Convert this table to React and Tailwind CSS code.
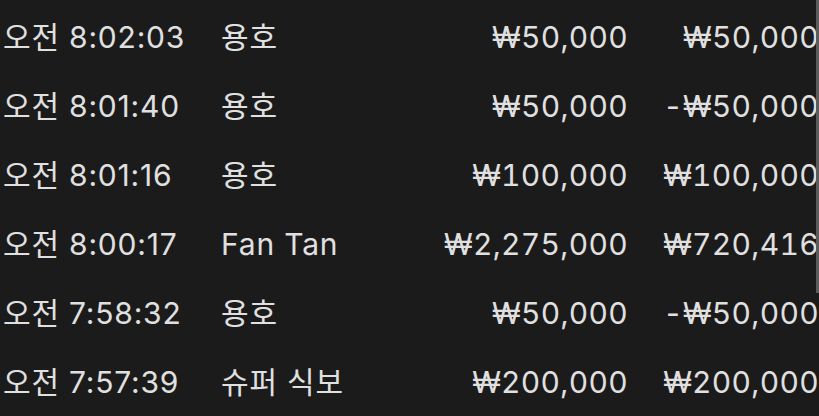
import React from 'react';

const rows = [
  { time: '오전 8:02:03', name: '용호', amount: '₩50,000', balance: '₩50,000' },
  { time: '오전 8:01:40', name: '용호', amount: '₩50,000', balance: '-₩50,000' },
  { time: '오전 8:01:16', name: '용호', amount: '₩100,000', balance: '₩100,000' },
  { time: '오전 8:00:17', name: 'Fan Tan', amount: '₩2,275,000', balance: '₩720,416' },
  { time: '오전 7:58:32', name: '용호', amount: '₩50,000', balance: '-₩50,000' },
  { time: '오전 7:57:39', name: '슈퍼 식보', amount: '₩200,000', balance: '₩200,000' },
];

export default function App() {
  return (
    <div
      className="relative w-[819px] h-[416px] overflow-hidden bg-[#1b1b1b] text-[#e0e0e0] pt-[2px]"
      style={{ fontFamily: 'Inter, "Noto Sans CJK KR", sans-serif' }}
    >
      {rows.map((r, i) => (
        <div key={i} className="flex items-center h-[69px] text-[30px] tracking-[0.8px] leading-none whitespace-nowrap">
          <div className="w-[221px] pl-[3px]">{r.time}</div>
          <div className="flex-1">{r.name}</div>
          <div className="w-[200px] text-right tabular-nums tracking-[0.3px]">{r.amount}</div>
          <div className="w-[191px] text-right tabular-nums tracking-[0.3px]">{r.balance}</div>
        </div>
      ))}
      {/* scrollbar thumb */}
      <div className="absolute right-0 top-0 w-[3px] h-[293px] bg-[#5c5c5c]" />
    </div>
  );
}
